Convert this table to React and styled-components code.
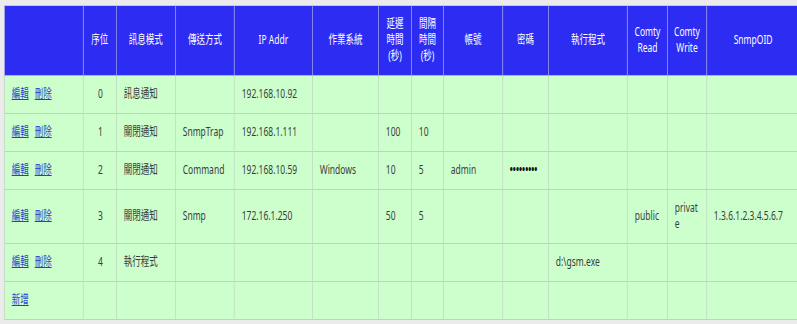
import React from "react";
import styled, { createGlobalStyle } from "styled-components";

// the reference is a horizontally condensed page: lay the table out at full
// width and squeeze it once, so text and columns shrink together
const SQUEEZE = 0.68;
const px = (v) => `${(v / SQUEEZE).toFixed(2)}px`;

const GlobalStyle = createGlobalStyle`
  body {
    margin: 0;
    background: #ebebeb;
    font-family: "Noto Sans", "Noto Sans CJK TC", sans-serif;
  }
`;

const Page = styled.div`
  padding: 5px 0 0 4px;
  overflow: hidden;
`;

const Grid = styled.table`
  width: ${px(796)};
  table-layout: fixed;
  border-collapse: collapse;
  font-size: 12.5px;
  line-height: 16px;
  transform: scaleX(${SQUEEZE});
  transform-origin: 0 0;
`;

const HeadCell = styled.th`
  width: ${(p) => px(p.$w)};
  box-sizing: border-box;
  background: #2c2cf2;
  color: #fff;
  font-weight: normal;
  text-align: center;
  vertical-align: middle;
  padding: 10px ${px(2)} 11px;
  border: 1px solid #9d9deb;
  border-top-color: #c9c9d6;
  border-bottom-color: #a8b8c8;
`;

const Cell = styled.td`
  box-sizing: border-box;
  background: #ccffcc;
  color: #3c3c3c;
  text-align: ${(p) => (p.$center ? "center" : "left")};
  vertical-align: middle;
  padding: 10px ${px(6)} 11px ${px(7)};
  border: 1px solid #bcd6bc;
  word-break: break-all;
  white-space: ${(p) => (p.$nowrap ? "nowrap" : "normal")};
`;

const ActionLink = styled.a`
  color: #2a3fd0;
  text-decoration: underline;
  cursor: pointer;
  margin-right: ${px(6)};
`;

const Dots = styled.span`
  font-size: 12px;
  color: #111;
  font-weight: bold;
`;

const columns = [
  { key: "act", label: [""], w: 79 },
  { key: "seq", label: ["序位"], w: 33, center: true },
  { key: "mode", label: ["訊息模式"], w: 59 },
  { key: "send", label: ["傳送方式"], w: 59 },
  { key: "ip", label: ["IP Addr"], w: 78 },
  { key: "os", label: ["作業系統"], w: 66 },
  { key: "delay", label: ["延遲", "時間", "(秒)"], w: 33 },
  { key: "gap", label: ["間隔", "時間", "(秒)"], w: 32 },
  { key: "user", label: ["帳號"], w: 59 },
  { key: "pwd", label: ["密碼"], w: 46 },
  { key: "exe", label: ["執行程式"], w: 79 },
  { key: "read", label: ["Comty", "Read"], w: 40 },
  { key: "write", label: ["Comty", "Write"], w: 39 },
  { key: "oid", label: ["SnmpOID"], w: 93 },
];

const rows = [
  { seq: "0", mode: "訊息通知", ip: "192.168.10.92" },
  { seq: "1", mode: "關閉通知", send: "SnmpTrap", ip: "192.168.1.111", delay: "100", gap: "10" },
  {
    seq: "2",
    mode: "關閉通知",
    send: "Command",
    ip: "192.168.10.59",
    os: "Windows",
    delay: "10",
    gap: "5",
    user: "admin",
    pwd: "•••••••••",
  },
  {
    seq: "3",
    mode: "關閉通知",
    send: "Snmp",
    ip: "172.16.1.250",
    delay: "50",
    gap: "5",
    read: "public",
    write: "private",
    oid: "1.3.6.1.2.3.4.5.6.7",
  },
  { seq: "4", mode: "執行程式", exe: "d:\\gsm.exe" },
];

const renderValue = (col, row) => {
  if (col.key === "pwd" && row.pwd) return <Dots>{row.pwd}</Dots>;
  return row[col.key] || "";
};

const App = () => (
  <Page>
    <GlobalStyle />
    <Grid>
      <thead>
        <tr>
          {columns.map((c) => (
            <HeadCell key={c.key} $w={c.w}>
              {c.label.map((l, i) => (
                <React.Fragment key={i}>
                  {i > 0 && <br />}
                  {l}
                </React.Fragment>
              ))}
            </HeadCell>
          ))}
        </tr>
      </thead>
      <tbody>
        {rows.map((r) => (
          <tr key={r.seq}>
            {columns.map((c) =>
              c.key === "act" ? (
                <Cell key={c.key} $nowrap>
                  <ActionLink>編輯</ActionLink>
                  <ActionLink>刪除</ActionLink>
                </Cell>
              ) : (
                <Cell key={c.key} $center={c.center}>
                  {renderValue(c, r)}
                </Cell>
              )
            )}
          </tr>
        ))}
        <tr>
          {columns.map((c) => (
            <Cell key={c.key}>{c.key === "act" && <ActionLink>新增</ActionLink>}</Cell>
          ))}
        </tr>
      </tbody>
    </Grid>
  </Page>
);

export default App;
